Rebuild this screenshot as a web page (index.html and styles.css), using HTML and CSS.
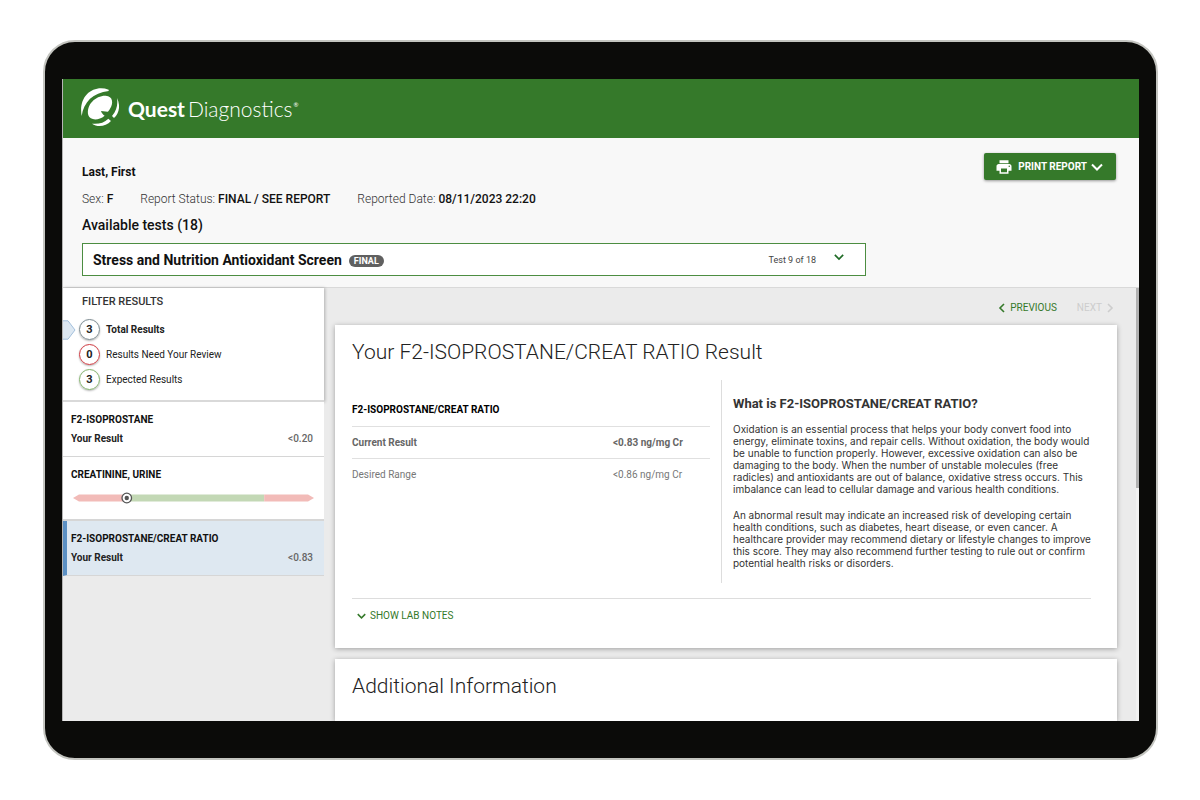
FILE: index.html
```html
<!DOCTYPE html>
<html lang="en">
<head>
<meta charset="utf-8">
<title>Quest Diagnostics – Lab Report</title>
<link rel="stylesheet" href="styles.css">
</head>
<body>
<div class="device">
<div class="screen">
  <header class="brand">
    <svg class="brand-mark" viewBox="0 0 114 114" aria-hidden="true">
      <path d="M83 5C37-12-9 24 2 84C8 42 36 14 83 9Z"/>
      <path d="M22 82C14 50 45 22 74 23C96 24 98 46 87 62C84 67 82 70 80 71L60 69C62 75 65 79 71 83C52 99 27 97 22 82Z"/>
      <path d="M108 30C119 52 115 76 99 90L93 84C107 68 111 50 108 30Z"/>
      <path d="M82 92L90 99C75 115 50 119 33 107C52 109 69 105 82 92Z"/>
    </svg>
    <span class="brand-name"><b>Quest</b><span class="brand-thin">Diagnostics</span><sup>®</sup></span>
  </header>

  <section class="patient">
    <div class="patient-top">
      <h1 class="patient-name">Last, First</h1>
      <button class="print" type="button">
        <svg class="print-icon" viewBox="0 0 24 24" aria-hidden="true"><path d="M19 8H5c-1.700 0-3 1.300-3 3v6h4v4h12v-4h4v-6c0-1.700-1.300-3-3-3zm-3 11H8v-5h8v5zm3-7c-.6 0-1-.4-1-1s.4-1 1-1 1 .4 1 1-.4 1-1 1zm-1-9H6v4h12V3z"/></svg>
        PRINT REPORT
        <svg class="chevron" viewBox="0 0 12 8" aria-hidden="true"><path d="M1 1.500L6 6.500L11 1.500"/></svg>
      </button>
    </div>
    <dl class="facts">
      <div><dt>Sex:</dt> <dd>F</dd></div>
      <div><dt>Report Status:</dt> <dd>FINAL / SEE REPORT</dd></div>
      <div><dt>Reported Date:</dt> <dd>08/11/2023 22:20</dd></div>
    </dl>
    <h2 class="available">Available tests (18)</h2>
    <button class="test-picker" type="button">
      <span class="test-name">Stress and Nutrition Antioxidant Screen</span>
      <span class="badge">FINAL</span>
      <span class="test-count">Test 9 of 18</span>
      <svg class="chevron" viewBox="0 0 12 8" aria-hidden="true"><path d="M1 1.500L6 6.500L11 1.500"/></svg>
    </button>
  </section>

  <div class="workspace">
    <aside class="sidebar">
      <section class="filters">
        <h2 class="filters-title">FILTER RESULTS</h2>
        <button class="filter is-active" type="button"><span class="count">3</span>Total Results
          <svg class="pointer" viewBox="0 0 13 20" aria-hidden="true"><path d="M0 .8H5L12 10L5 19.200H0"/></svg>
        </button>
        <button class="filter" type="button"><span class="count count-review">0</span>Results Need Your Review</button>
        <button class="filter" type="button"><span class="count count-expected">3</span>Expected Results</button>
      </section>
      <button class="result" type="button">
        <span class="result-name">F2-ISOPROSTANE</span>
        <span class="result-row"><span>Your Result</span><span class="result-value">&lt;0.20</span></span>
      </button>
      <button class="result result-range" type="button">
        <span class="result-name">CREATININE, URINE</span>
        <svg class="range" viewBox="0 0 242 12" role="img" aria-label="Result within range">
          <path class="range-out" d="M0 6L6 2.500H50V9.500H6Z"/>
          <path class="range-in" d="M50 2.500H192V9.500H50Z"/>
          <path class="range-out" d="M192 2.500H236L242 6L236 9.500H192Z"/>
          <circle class="range-ring" cx="54" cy="6" r="4.800"/>
          <circle class="range-dot" cx="54" cy="6" r="2.200"/>
        </svg>
      </button>
      <button class="result is-selected" type="button">
        <span class="result-name">F2-ISOPROSTANE/CREAT RATIO</span>
        <span class="result-row"><span>Your Result</span><span class="result-value">&lt;0.83</span></span>
      </button>
    </aside>

    <main class="content">
      <nav class="pager">
        <a href="#previous"><svg class="arrow" viewBox="0 0 8 12" aria-hidden="true"><path d="M6 2L2 6L6 10"/></svg>PREVIOUS</a>
        <a class="is-disabled" href="#next">NEXT<svg class="arrow" viewBox="0 0 8 12" aria-hidden="true"><path d="M2 2L6 6L2 10"/></svg></a>
      </nav>
      <article class="card">
        <h2 class="card-title">Your F2-ISOPROSTANE/CREAT RATIO Result</h2>
        <div class="columns">
          <table class="values">
            <thead><tr><th colspan="2" scope="col">F2-ISOPROSTANE/CREAT RATIO</th></tr></thead>
            <tbody>
              <tr class="current"><th scope="row">Current Result</th><td>&lt;0.83 ng/mg Cr</td></tr>
              <tr><th scope="row">Desired Range</th><td>&lt;0.86 ng/mg Cr</td></tr>
            </tbody>
          </table>
          <section class="about">
            <h3>What is F2-ISOPROSTANE/CREAT RATIO?</h3>
            <p>Oxidation is an essential process that helps your body convert food into<br>energy, eliminate toxins, and repair cells. Without oxidation, the body would<br>be unable to function properly. However, excessive oxidation can also be<br>damaging to the body. When the number of unstable molecules (free<br>radicles) and antioxidants are out of balance, oxidative stress occurs. This<br>imbalance can lead to cellular damage and various health conditions.</p>
            <p>An abnormal result may indicate an increased risk of developing certain<br>health conditions, such as diabetes, heart disease, or even cancer. A<br>healthcare provider may recommend dietary or lifestyle changes to improve<br>this score. They may also recommend further testing to rule out or confirm<br>potential health risks or disorders.</p>
          </section>
        </div>
        <div class="notes">
          <button class="notes-toggle" type="button"><svg class="chevron" viewBox="0 0 12 8" aria-hidden="true"><path d="M1 1.500L6 6.500L11 1.500"/></svg>SHOW LAB NOTES</button>
        </div>
      </article>
      <article class="card card-last">
        <h2 class="card-title">Additional Information</h2>
      </article>
    </main>
    <div class="scrollbar"><div class="thumb"></div></div>
  </div>
</div>
</div>
</body>
</html>
```

FILE: styles.css
```css
* { box-sizing: border-box; }
body {
  margin: 0;
  height: 100vh;
  padding: 40px 42px 40px 43px;
  background: #fff;
  color: #111;
  font-family: Roboto, "Liberation Sans", sans-serif;
  font-size: 10px;
  line-height: 12px;
}
h1, h2, h3, p, dl, dd { margin: 0; }
button {
  border: 0;
  padding: 0;
  background: none;
  color: inherit;
  font: inherit;
  text-align: left;
}
a { color: inherit; text-decoration: none; }

.device {
  height: 100%;
  padding: 37px 17px;
  border: 2px solid #c4c5c0;
  border-radius: 32px;
  background: #0b0b09;
}
.screen {
  display: flex;
  flex-direction: column;
  height: 100%;
  overflow: hidden;
  border-left: 1px solid #b5b5b5;
  background: #ebebeb;
}

.brand {
  display: flex;
  flex: none;
  align-items: center;
  gap: 9px;
  height: 59px;
  padding: 0 18px 3px;
  background: #35792a;
  color: #fff;
}
.brand-mark { width: 38px; height: 38px; fill: #fff; }
.brand-name {
  display: flex;
  align-items: baseline;
  gap: 3px;
  padding-top: 3px;
  font-family: Lato, sans-serif;
  font-size: 21px;
  line-height: 24px;
}
.brand-thin { font-weight: 300; }
.brand-name sup { align-self: flex-start; margin-left: -2px; padding-top: 5px; font-size: 6px; line-height: 6px; }

.chevron {
  width: 12px;
  height: 8px;
  fill: none;
  stroke: currentColor;
  stroke-width: 2;
}

.patient {
  flex: none;
  padding: 15px 23px 11px 19px;
  border-bottom: 1px solid #d9d9d9;
  background: #f8f8f8;
}
.patient-top {
  display: flex;
  justify-content: space-between;
  align-items: flex-start;
}
.patient-name { padding-top: 11px; font-size: 12px; line-height: 16px; font-weight: 700; }
.print {
  display: flex;
  align-items: center;
  gap: 4px;
  height: 27px;
  padding: 0 13px 0 11px;
  border-radius: 2px;
  background: #35792a;
  box-shadow: 0 1px 3px rgba(0, 0, 0, .4);
  color: #fff;
  font-weight: 700;
}
.print-icon { width: 18px; height: 18px; margin-right: 1px; fill: #fff; }
.facts {
  display: flex;
  gap: 27px;
  padding-top: 11px;
  font-size: 12px;
  line-height: 16px;
}
.facts dt, .facts dd { display: inline; }
.facts dt { color: #333; font-weight: 300; }
.facts dd { font-weight: 500; }
.available { padding: 9px 0; font-size: 14px; line-height: 18px; font-weight: 500; }
.test-picker {
  display: flex;
  align-items: center;
  width: 100%;
  max-width: 784px;
  height: 33px;
  padding: 0 21px 0 10px;
  border: 1px solid #4c8d41;
  background: #fff;
}
.test-name { font-size: 14px; line-height: 16px; font-weight: 700; }
.badge {
  margin: 3px 0 0 7px;
  padding: 0 5px;
  border-radius: 6px;
  background: #606060;
  color: #fff;
  font-size: 9px;
  font-weight: 700;
}
.test-count { margin-left: auto; color: #444; font-size: 9px; }
.test-picker .chevron { width: 10px; margin: 0 0 5px 18px; color: #1f6b25; }

.workspace { display: flex; flex: 1; min-height: 0; }
.sidebar { flex: 0 0 261px; }
.filters {
  display: flex;
  flex-direction: column;
  gap: 4px;
  height: 114px;
  padding: 7px 16px;
  border-bottom: 2px solid #d9d9d9;
  background: #fff;
  box-shadow: 1px 0 3px rgba(0, 0, 0, .25);
}
.filters-title {
  padding: 0 3px 7px;
  color: #333;
  font-size: 11px;
  line-height: 13px;
  font-weight: 500;
}
.filter {
  position: relative;
  display: flex;
  align-items: center;
  gap: 6px;
  color: #222;
}
.filter.is-active { font-weight: 700; }
.count {
  width: 21px;
  height: 21px;
  border: 1px solid #7b8a90;
  border-radius: 50%;
  box-shadow: 0 1px 2px rgba(0, 0, 0, .3);
  font-size: 11px;
  line-height: 19px;
  font-weight: 700;
  text-align: center;
}
.count-review { border-color: #cf3a41; }
.count-expected { border-color: #83b36c; }
.pointer {
  position: absolute;
  left: -16px;
  width: 13px;
  height: 20px;
  fill: #dde8f2;
  stroke: #a3c0dc;
}
.result {
  display: flex;
  flex-direction: column;
  width: 100%;
  height: 55px;
  padding: 12px 11px 0 8px;
  border-bottom: 1px solid #d6d6d6;
  background: #fff;
  font-weight: 700;
}
.result-range { height: 64px; padding-right: 10px; border-bottom-width: 2px; }
.result-row { display: flex; justify-content: space-between; width: 100%; padding-top: 7px; color: #222; }
.result-value { color: #666; font-weight: 500; }
.range { display: block; width: 100%; height: 12px; margin-top: 11px; padding-left: 2px; overflow: visible; }
.range-out { fill: #f2bbb8; }
.range-in { fill: #c3d8b5; }
.range-ring { fill: #fff; stroke: #555; stroke-width: 1.300; }
.range-dot { fill: #555; }
.result.is-selected { padding-left: 4px; border-left: 4px solid #5b8fc2; background: #dee8f1; }

.content { display: flex; flex: 1; flex-direction: column; padding: 0 19px 0 11px; }
.pager {
  display: flex;
  flex: none;
  justify-content: flex-end;
  gap: 20px;
  height: 37px;
  padding: 13px 3px 0 0;
  color: #35792a;
}
.pager a { display: flex; align-items: center; height: 14px; gap: 4px; }
.pager .is-disabled { color: #cdcdcd; }
.arrow { width: 8px; height: 12px; fill: none; stroke: currentColor; stroke-width: 1.600; }
.card {
  flex: none;
  margin-bottom: 11px;
  padding: 13px 26px 0 17px;
  background: #fff;
  box-shadow: 0 1px 5px rgba(0, 0, 0, .32);
}
.card-last { flex: 1; margin-bottom: 0; }
.card-title {
  color: #222;
  font-size: 21px;
  line-height: 28px;
  font-weight: 300;
}
.columns { display: grid; grid-template-columns: 358px 1fr; gap: 11px; padding: 14px 0 15px; }
.values { width: 100%; align-self: start; margin-top: 14px; border-collapse: collapse; color: #777; }
.values th, .values td { height: 32px; padding: 1px 0 0; text-align: left; font-weight: 400; }
.values thead th { color: #000; font-weight: 700; }
.values tbody tr { border-top: 1px solid #e0e0e0; }
.values td { width: 97px; }
.values .current th, .values .current td { font-weight: 700; color: #666; }
.about { min-height: 202px; padding: 15px 0 0 11px; border-left: 1px solid #ddd; color: #333; white-space: nowrap; }
.about h3 { margin-bottom: 10px; font-size: 13px; line-height: 18px; font-weight: 700; }
.about p { margin-bottom: 14px; font-family: Inter, sans-serif; }
.notes { height: 50px; padding: 11px 5px; border-top: 1px solid #ddd; }
.notes-toggle { display: flex; align-items: center; gap: 4px; color: #35792a; }
.notes-toggle .chevron { width: 9px; }
.scrollbar { flex: 0 0 4px; background: #f1f1f1; }
.thumb { height: 200px; background: #b1b1b1; }
```
